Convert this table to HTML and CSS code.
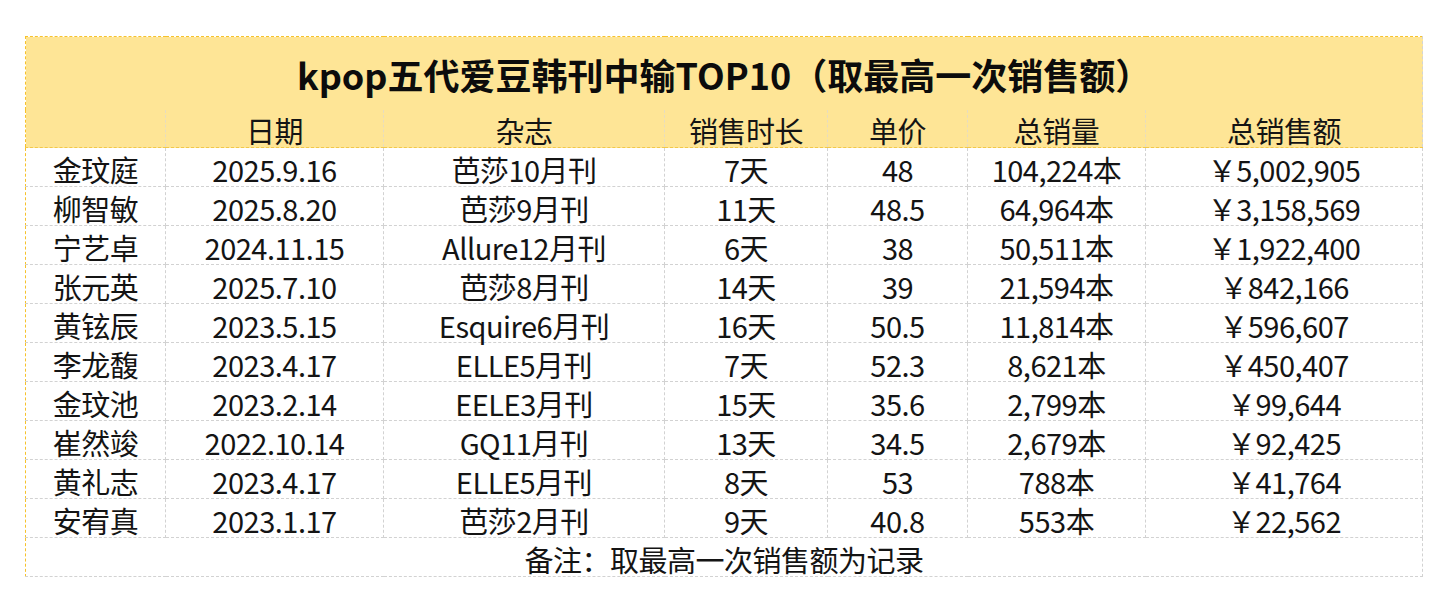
FILE: index.html
```html
<!DOCTYPE html>
<html lang="zh-CN">
<head>
<meta charset="utf-8">
<title>kpop五代爱豆韩刊中输TOP10</title>
<link rel="stylesheet" href="styles.css">
</head>
<body>
<div class="page">
<table class="sheet">
  <colgroup>
    <col class="c1"><col class="c2"><col class="c3"><col class="c4"><col class="c5"><col class="c6"><col class="c7">
  </colgroup>
  <thead>
    <tr class="title-row"><th colspan="7">kpop五代爱豆韩刊中输TOP10（取最高一次销售额）</th></tr>
    <tr class="head-row">
      <th></th><th>日期</th><th>杂志</th><th>销售时长</th><th>单价</th><th>总销量</th><th>总销售额</th>
    </tr>
  </thead>
  <tbody>
    <tr><td>金玟庭</td><td>2025.9.16</td><td>芭莎10月刊</td><td>7天</td><td>48</td><td>104,224本</td><td>￥5,002,905</td></tr>
    <tr><td>柳智敏</td><td>2025.8.20</td><td>芭莎9月刊</td><td>11天</td><td>48.5</td><td>64,964本</td><td>￥3,158,569</td></tr>
    <tr><td>宁艺卓</td><td>2024.11.15</td><td>Allure12月刊</td><td>6天</td><td>38</td><td>50,511本</td><td>￥1,922,400</td></tr>
    <tr><td>张元英</td><td>2025.7.10</td><td>芭莎8月刊</td><td>14天</td><td>39</td><td>21,594本</td><td>￥842,166</td></tr>
    <tr><td>黄铉辰</td><td>2023.5.15</td><td>Esquire6月刊</td><td>16天</td><td>50.5</td><td>11,814本</td><td>￥596,607</td></tr>
    <tr><td>李龙馥</td><td>2023.4.17</td><td>ELLE5月刊</td><td>7天</td><td>52.3</td><td>8,621本</td><td>￥450,407</td></tr>
    <tr><td>金玟池</td><td>2023.2.14</td><td>EELE3月刊</td><td>15天</td><td>35.6</td><td>2,799本</td><td>￥99,644</td></tr>
    <tr><td>崔然竣</td><td>2022.10.14</td><td>GQ11月刊</td><td>13天</td><td>34.5</td><td>2,679本</td><td>￥92,425</td></tr>
    <tr><td>黄礼志</td><td>2023.4.17</td><td>ELLE5月刊</td><td>8天</td><td>53</td><td>788本</td><td>￥41,764</td></tr>
    <tr><td>安宥真</td><td>2023.1.17</td><td>芭莎2月刊</td><td>9天</td><td>40.8</td><td>553本</td><td>￥22,562</td></tr>
    <tr class="note-row"><td colspan="7">备注：取最高一次销售额为记录</td></tr>
  </tbody>
</table>
</div>
</body>
</html>
```
FILE: styles.css
```css
html, body {
  margin: 0;
  padding: 0;
  background: #ffffff;
}
body {
  font-family: "Noto Sans CJK SC", "Noto Sans", sans-serif;
  color: #141414;
}
.page {
  padding: 36px 0 0 25px;
}
.sheet {
  border-collapse: collapse;
  table-layout: fixed;
  width: 1397px;
  border-left: 1px dashed #f6c22c;
  border-top: 1px dashed #f6c22c;
  border-right: 1px dashed #d4d4d4;
  border-bottom: 1px dashed #d4d4d4;
}
.c1 { width: 140px; }
.c2 { width: 218px; }
.c3 { width: 281px; }
.c4 { width: 163px; }
.c5 { width: 140px; }
.c6 { width: 178px; }
.c7 { width: 277px; }

.sheet th,
.sheet td {
  padding: 0;
  text-align: center;
  vertical-align: middle;
  white-space: nowrap;
  font-size: 29px;
  line-height: 1;
  font-weight: normal;
  letter-spacing: -0.5px;
}
.sheet thead th {
  background: #fee596;
}
.title-row th {
  height: 72px;
  padding-top: 1px;
  font-size: 36px;
  font-weight: bold;
  letter-spacing: 0;
  color: #0c0c0c;
}
.head-row th {
  height: 33px;
  padding-top: 4px;
  border-left: 1px dashed #e6dcc0;
  border-bottom: 1px dashed #f2c84a;
}
.head-row th:first-child {
  border-left: none;
}
.sheet tbody td {
  height: 34px;
  padding-top: 4px;
  border: 1px dashed #d2d2d2;
}
.sheet tbody tr td:first-child {
  border-left: 1px dashed #f6c22c;
}
```
